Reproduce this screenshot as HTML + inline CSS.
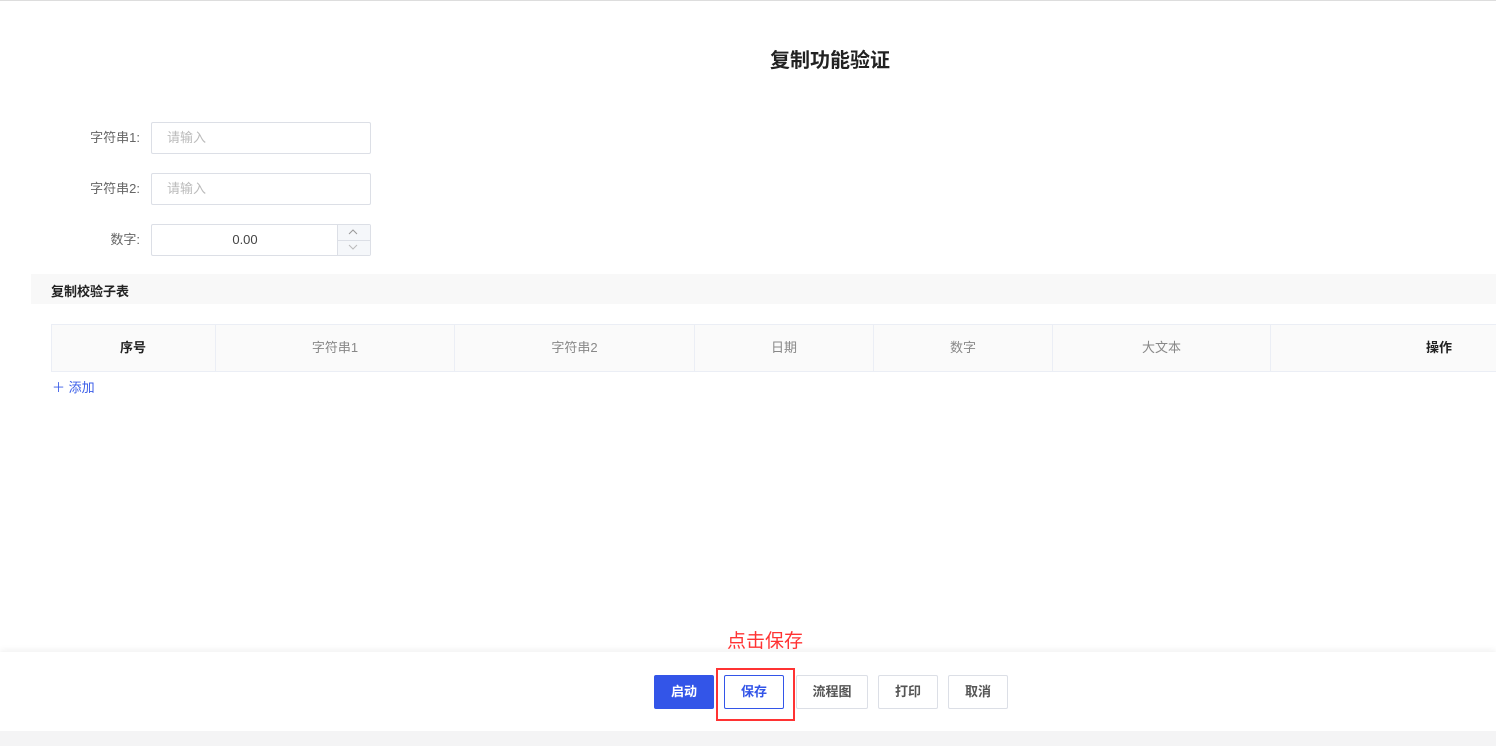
<!DOCTYPE html>
<html><head><meta charset="utf-8"><style>
*{box-sizing:border-box;margin:0;padding:0}
body{width:1496px;height:746px;position:relative;background:#fff;font-family:"Liberation Sans","Noto Sans CJK SC",sans-serif;overflow:hidden;font-size:13px;color:#333}
.a{position:absolute}
.lbl{position:absolute;width:100px;text-align:right;color:#666;font-size:13px;left:40px}
.inp{position:absolute;left:151px;width:220px;height:32px;border:1px solid #dcdfe6;border-radius:2px;color:#bbb;padding-left:15px;line-height:30px;font-size:13px}
.th{position:absolute;top:324px;height:48px;line-height:48px;text-align:center;color:#888;font-size:13px;border-right:1px solid #ebeef5}
.btn{position:absolute;top:675px;height:34px;line-height:32px;border:1px solid #dcdfe6;border-radius:2px;text-align:center;font-size:13px;font-weight:bold;color:#555;background:#fff}
</style></head><body>
<div class="a" style="left:0;top:0;width:1496px;height:1px;background:#ddd"></div>
<div class="a" style="left:0;top:48px;width:1660px;text-align:center;font-size:20px;font-weight:bold;color:#222;line-height:26px">复制功能验证</div>

<div class="lbl" style="top:127px">字符串1:</div>
<div class="inp" style="top:122px">请输入</div>
<div class="lbl" style="top:178px">字符串2:</div>
<div class="inp" style="top:173px">请输入</div>
<div class="lbl" style="top:229px">数字:</div>
<div class="inp" style="top:224px;color:#444;padding-left:0;text-align:center;padding-right:32px">0.00</div>
<div class="a" style="left:337px;top:225px;width:33px;height:30px;background:#f5f7fa;border-left:1px solid #dcdfe6"></div>
<div class="a" style="left:337px;top:240px;width:33px;height:1px;background:#dcdfe6"></div>
<svg class="a" style="left:348px;top:229px" width="10" height="6"><path d="M1 5L5 1L9 5" fill="none" stroke="#999" stroke-width="1"/></svg>
<svg class="a" style="left:348px;top:244px" width="10" height="6"><path d="M1 1L5 5L9 1" fill="none" stroke="#bbb" stroke-width="1"/></svg>

<div class="a" style="left:31px;top:274px;width:1465px;height:30px;background:#f8f8f8"></div>
<div class="a" style="left:51px;top:281px;font-size:13px;font-weight:bold;color:#222">复制校验子表</div>

<div class="a" style="left:51px;top:324px;width:1445px;height:48px;background:#fafafa;border:1px solid #ebeef5;border-right:none"></div>
<div class="th" style="left:51px;width:165px;color:#222;font-weight:bold">序号</div>
<div class="th" style="left:216px;width:239px">字符串1</div>
<div class="th" style="left:455px;width:240px">字符串2</div>
<div class="th" style="left:695px;width:179px">日期</div>
<div class="th" style="left:874px;width:179px">数字</div>
<div class="th" style="left:1053px;width:218px">大文本</div>
<div class="a" style="left:1426px;top:324px;line-height:48px;color:#222;font-weight:bold">操作</div>
<div class="a" style="left:52px;top:377px;color:#3a5de8;font-size:13px">＋ 添加</div>

<div class="a" style="left:0;top:652px;width:1496px;height:80px;background:#fff;box-shadow:0 -2px 6px rgba(0,0,0,.06)"></div>
<div class="a" style="left:0;top:731px;width:1496px;height:15px;background:#f4f4f5"></div>
<div class="a" style="left:727px;top:631px;font-size:19px;color:#f33;line-height:22px">点击保存</div>
<div class="btn" style="left:654px;width:60px;background:#3355e8;border-color:#3355e8;color:#fff">启动</div>
<div class="btn" style="left:724px;width:60px;border-color:#3355e8;color:#3355e8">保存</div>
<div class="btn" style="left:796px;width:72px">流程图</div>
<div class="btn" style="left:878px;width:60px">打印</div>
<div class="btn" style="left:948px;width:60px">取消</div>
<div class="a" style="left:716px;top:668px;width:79px;height:53px;border:2px solid #f33"></div>
</body></html>
